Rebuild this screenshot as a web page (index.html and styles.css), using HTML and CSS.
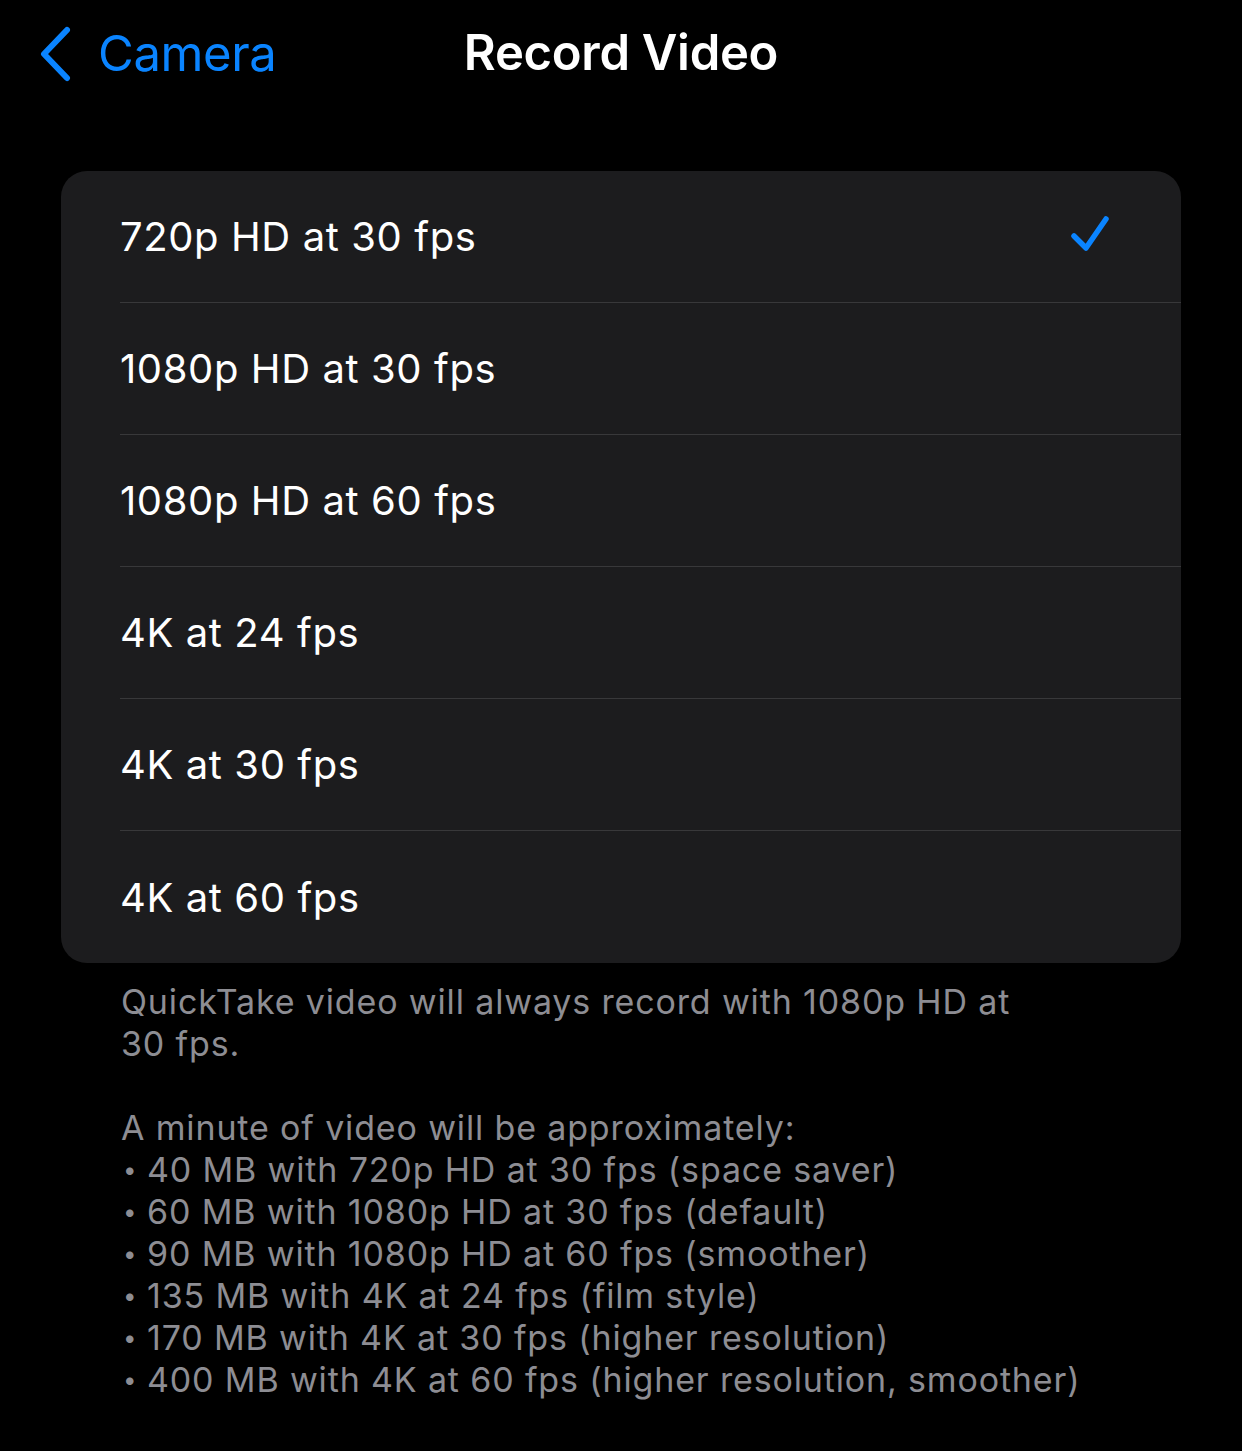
FILE: index.html
```html
<!DOCTYPE html>
<html lang="en">
  <head>
    <meta charset="UTF-8" />
    <meta name="viewport" content="width=device-width, initial-scale=1.0" />
    <title>Record Video</title>
    <link rel="stylesheet" href="styles.css">
  </head>
  <body>
    <div class="nav-bar">
      <a class="back-link" href="#">
        <svg class="back-chevron" viewBox="0 0 34 56" width="34" height="56">
          <path d="M29 4 L6 28 L29 52" fill="none" stroke="#0a84ff" stroke-width="6" stroke-linecap="round" stroke-linejoin="round" />
        </svg>
        <span>Camera</span>
      </a>
      <h1 class="nav-title">Record Video</h1>
    </div>

    <div class="settings-group">
      <div class="option-row">
        <span class="option-label">720p HD at 30 fps</span>
        <svg class="check" viewBox="0 0 44 40" width="44" height="40">
          <path d="M5 21 L17 33 L37 4" fill="none" stroke="#0a84ff" stroke-width="5.5" stroke-linecap="round" stroke-linejoin="round" />
        </svg>
      </div>
      <div class="option-row">
        <span class="option-label">1080p HD at 30 fps</span>
      </div>
      <div class="option-row">
        <span class="option-label">1080p HD at 60 fps</span>
      </div>
      <div class="option-row">
        <span class="option-label">4K at 24 fps</span>
      </div>
      <div class="option-row">
        <span class="option-label">4K at 30 fps</span>
      </div>
      <div class="option-row">
        <span class="option-label">4K at 60 fps</span>
      </div>
    </div>

    <div class="group-footer">
      <p>QuickTake video will always record with 1080p HD at<br />30 fps.</p>
      <p>A minute of video will be approximately:</p>
      <ul class="size-list">
        <li>40 MB with 720p HD at 30 fps (space saver)</li>
        <li>60 MB with 1080p HD at 30 fps (default)</li>
        <li>90 MB with 1080p HD at 60 fps (smoother)</li>
        <li>135 MB with 4K at 24 fps (film style)</li>
        <li>170 MB with 4K at 30 fps (higher resolution)</li>
        <li>400 MB with 4K at 60 fps (higher resolution, smoother)</li>
      </ul>
    </div>
  </body>
</html>
```

FILE: styles.css
```css
* {
  margin: 0;
  padding: 0;
  box-sizing: border-box;
}

body {
  font-family: Inter, "Noto Sans", sans-serif;
  background: #000;
  color: #fff;
  width: 1242px;
  height: 1451px;
  overflow: hidden;
}

.nav-bar {
  position: relative;
  height: 104px;
  display: flex;
  align-items: center;
  justify-content: center;
}

.back-link {
  position: absolute;
  left: 38px;
  top: 24px;
  display: flex;
  align-items: center;
  gap: 26px;
  color: #0a84ff;
  text-decoration: none;
  font-size: 49px;
  letter-spacing: -0.4px;
}

.nav-title {
  font-size: 49px;
  font-weight: 600;
  letter-spacing: -0.3px;
}

.settings-group {
  margin: 67px 61px 0 61px;
  background: #1c1c1e;
  border-radius: 26px;
  overflow: hidden;
}

.option-row {
  height: 132px;
  margin-left: 59px;
  padding-right: 68px;
  display: flex;
  align-items: center;
  justify-content: space-between;
  border-bottom: 1.5px solid #38383a;
}

.option-row:last-child {
  border-bottom: none;
}

.option-label {
  font-size: 40px;
  letter-spacing: 0.6px;
}

.check {
  margin-top: -4px;
}

.group-footer {
  padding: 18px 100px 0 121px;
  color: #8d8d93;
  font-size: 34px;
  line-height: 42px;
  letter-spacing: 0.85px;
}

.group-footer p {
  margin-bottom: 42px;
}

.group-footer p + p {
  margin-bottom: 0;
}

.size-list {
  list-style: none;
}

.size-list li::before {
  content: "•";
  display: inline-block;
  vertical-align: top;
  width: 24px;
  padding-left: 2px;
  font-size: 24px;
  line-height: 42px;
}
```
